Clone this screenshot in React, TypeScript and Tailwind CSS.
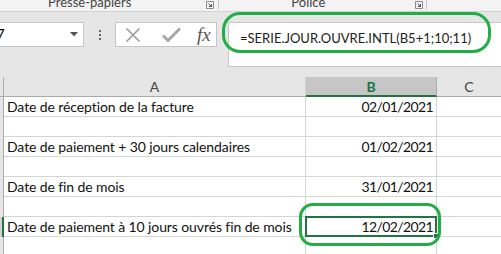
import React from 'react';

// rows of the sheet (A, B)
const rows: [string, string][] = [
  ['Date de réception de la facture', '02/01/2021'],
  ['', ''],
  ['Date de paiement + 30 jours calendaires', '01/02/2021'],
  ['', ''],
  ['Date de fin de mois', '31/01/2021'],
  ['', ''],
  ['Date de paiement à 10 jours ouvrés fin de mois', '12/02/2021'],
  ['', ''],
];

const Launcher: React.FC = () => (
  <svg width="8" height="8" viewBox="0 0 8 8" className="shrink-0">
    <path d="M0.5 0.5h7v7h-7z" fill="none" stroke="#8a8a8a" />
    <path d="M2.5 2.5l3 3M5.5 3v2.5H3" fill="none" stroke="#555" />
  </svg>
);

const App: React.FC = () => {
  const font = { fontFamily: 'Lato, "Liberation Sans", sans-serif' };

  return (
    <div className="relative w-[501px] h-[254px] overflow-hidden bg-white text-black" style={font}>
      {/* ribbon group labels */}
      <div className="h-[12px] bg-[#f3f3f3] border-b border-[#d2d2d2] flex items-end overflow-hidden text-[13px] leading-[13px] text-[#444]">
        <span className="ml-[48px] mb-[2px] shrink-0">Presse-papiers</span>
        <div className="ml-[75px] mb-[2px]"><Launcher /></div>
        <div className="ml-[4px] w-px h-[10px] bg-[#c8c8c8] mb-[1px] shrink-0" />
        <span className="ml-[72px] mb-[2px] shrink-0">Police</span>
        <div className="ml-[90px] mb-[2px]"><Launcher /></div>
        <div className="ml-[3px] w-px h-[10px] bg-[#c8c8c8] mb-[1px] shrink-0" />
      </div>

      {/* formula bar */}
      <div className="h-[65px] bg-[#e6e6e6] flex items-start pt-[10px]">
        <div className="w-[84px] h-[25px] bg-white border border-l-0 border-[#c6c6c6] flex items-center justify-between pr-[5px] shrink-0">
          <span className="-ml-[4px] text-[15px]">7</span>
          <svg width="8" height="5" viewBox="0 0 8 5"><path d="M0 0h8L4 4.5z" fill="#555" /></svg>
        </div>
        <div className="w-[31px] h-[25px] flex flex-col items-center justify-center gap-[2px] shrink-0">
          <div className="w-[2px] h-[2px] bg-[#666]" />
          <div className="w-[2px] h-[2px] bg-[#666]" />
          <div className="w-[2px] h-[2px] bg-[#666]" />
        </div>
        <div className="w-[102px] h-[25px] bg-white border border-[#c6c6c6] flex items-center shrink-0">
          <svg width="16" height="16" viewBox="0 0 16 16" className="ml-[9px] shrink-0">
            <path d="M1.5 1.5l13 13M14.5 1.5l-13 13" stroke="#9a9a9a" strokeWidth="1.6" />
          </svg>
          <svg width="19" height="16" viewBox="0 0 19 16" className="ml-[21px] shrink-0">
            <path d="M1 8.5l5 5L18 1.5" fill="none" stroke="#a6a6a6" strokeWidth="3" />
          </svg>
          <span className="ml-[16px] text-[19px] leading-none italic text-[#555]" style={{ fontFamily: '"Liberation Serif", serif' }}>fx</span>
        </div>
        <div className="ml-[11px] flex-1 min-w-0 h-[45px] bg-white border-l border-b border-t border-[#c6c6c6] pl-[11px] pt-[6px] text-[13px] text-[#222] whitespace-nowrap overflow-hidden">
          =SERIE.JOUR.OUVRE.INTL(B5+1;10;11)
        </div>
      </div>

      {/* sheet */}
      <div className="flex flex-col">
        <div className="h-[20px] flex bg-[#e6e6e6] border-b border-[#ababab] text-[14px] text-[#444]">
          <div className="w-[4px] border-r border-[#ababab] shrink-0" />
          <div className="w-[302px] border-r border-[#d0d0d0] flex items-center justify-center shrink-0">A</div>
          <div className="w-[131px] bg-[#c6c6c6] border-r border-[#ababab] border-b-2 border-b-[#217346] -mb-px flex items-center justify-center font-bold text-[#217346] shrink-0">B</div>
          <div className="flex-1 flex items-center justify-center">C</div>
        </div>
        {rows.map(([a, b], i) => (
          <div key={i} className="h-[20px] flex text-[14px] text-[#111]">
            <div className={`w-[4px] shrink-0 border-r ${i === 6 ? 'bg-[#d2d2d2] border-r-2 border-[#217346]' : 'bg-[#e6e6e6] border-[#ababab]'}`} />
            <div className="w-[302px] shrink-0 border-r border-b border-[#d4d4d4] pl-[3px] flex items-center whitespace-nowrap overflow-hidden tracking-[-0.1px]">{a}</div>
            <div className="w-[131px] shrink-0 border-r border-b border-[#d4d4d4] pr-[3px] flex items-center justify-end relative tracking-[-0.6px]">
              {b}
              {i === 6 && (
                <>
                  <div className="absolute -left-px -top-px -right-px -bottom-px border-2 border-[#217346]" />
                  <div className="absolute -right-[3px] -bottom-[3px] w-[6px] h-[6px] bg-[#217346] border border-white" />
                </>
              )}
            </div>
            <div className="flex-1 border-b border-[#d4d4d4]" />
          </div>
        ))}
      </div>

      {/* green highlight marks */}
      <div className="absolute left-[222px] top-[12px] w-[269px] h-[41px] border-[3px] border-[#22ae45] rounded-[18px]" />
      <div className="absolute left-[299px] top-[203px] w-[142px] h-[43px] border-[3px] border-[#22ae45] rounded-[14px]" />
    </div>
  );
};

export default App;
